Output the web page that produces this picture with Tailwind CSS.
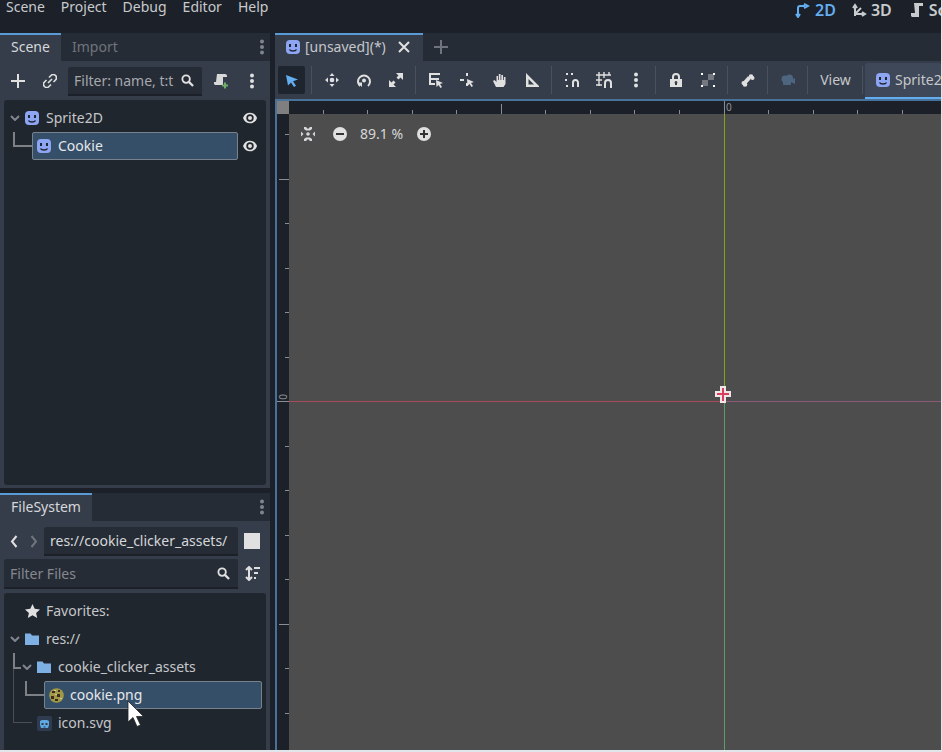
<!DOCTYPE html>
<html lang="en">
<head>
    <meta charset="UTF-8">
    <title>Godot Editor</title>
    <script src="https://cdn.jsdelivr.net/npm/@tailwindcss/browser@4"></script>
</head>
<body class="bg-[#e0e6ea] overflow-hidden">
    <svg class="hidden">
        <symbol id="face" viewBox="0 0 14 14">
            <rect width="14" height="14" rx="4" fill="#8da5f3"/>
            <rect x="3" y="4" width="2" height="3" fill="#1f2633"/>
            <rect x="9" y="4" width="2" height="3" fill="#1f2633"/>
            <path d="M3.500 9.500c1 2 6 2 7 0" fill="none" stroke="#1f2633" stroke-width="1.400"/>
        </symbol>
        <symbol id="eye" viewBox="0 0 14 14">
            <path d="M0 7C2 0 12 0 14 7C12 14 2 14 0 7z" fill="#e0e0e0"/>
            <circle cx="7" cy="7" r="3.700" fill="#20262e"/>
            <circle cx="7" cy="7" r="2" fill="#e0e0e0"/>
        </symbol>
        <symbol id="dots" viewBox="0 0 4 16">
            <circle cx="2" cy="2.500" r="2" fill="currentColor"/>
            <circle cx="2" cy="8" r="2" fill="currentColor"/>
            <circle cx="2" cy="13.500" r="2" fill="currentColor"/>
        </symbol>
        <symbol id="search" viewBox="0 0 14 14">
            <circle cx="5.500" cy="5.500" r="4" fill="none" stroke="#e0e0e0" stroke-width="2"/>
            <path d="M8.500 8.500L13 13" stroke="#e0e0e0" stroke-width="2.400"/>
        </symbol>
        <symbol id="folder" viewBox="0 0 14 14">
            <path d="M0 1.500h5.500l1.500 2h7v9.500h-14z" fill="#7fb0e3"/>
        </symbol>
        <symbol id="chevron" viewBox="0 0 10 6">
            <path d="M1 1l4 4l4-4" fill="none" stroke="#808590" stroke-width="2"/>
        </symbol>
    </svg>

    <div class="w-[941px] h-[750px] bg-[#1c2129] flex flex-col font-['Noto_Sans',sans-serif] text-[14px] leading-[20px] text-[#d5d7da] overflow-hidden">
        <!-- top menu -->
        <header class="h-[33px] shrink-0 flex items-start relative">
            <nav class="flex -mt-[3px] pl-[6px] gap-[16px] text-[#c8cacd]">
                <span>Scene</span><span>Project</span><span>Debug</span><span>Editor</span><span>Help</span>
            </nav>
            <div class="absolute left-[795px] -top-[2px] flex items-center font-semibold text-[16px] h-[24px]">
                <svg class="w-[15px] h-[15px] mr-[5px]" viewBox="0 0 15 15" fill="none" stroke="#63aef0" stroke-width="2"><path d="M1 11l2 3l2-3M3 12V5q0-2 2-2h5M9 1l4 2l-4 2" /></svg>
                <span class="text-[#63aef0]">2D</span>
                <svg class="w-[15px] h-[15px] ml-[16px] mr-[4px]" viewBox="0 0 15 15" fill="none" stroke="#c8cacd" stroke-width="2"><path d="M3 13V3M1 5l2-3l2 3M3 11h9M10 9l3 2l-3 2M3 11l6-6"/></svg>
                <span class="text-[#c8cacd]">3D</span>
                <svg class="w-[14px] h-[16px] ml-[18px] mr-[5px]" viewBox="0 0 14 16"><path d="M4 1h9v3h-4v11h-7l-1-1v-3h4z" fill="#c8cacd"/></svg>
                <span class="text-[#c8cacd]">Script</span>
            </div>
        </header>

        <main class="flex-1 flex min-h-0">
            <!-- left docks -->
            <aside class="w-[270px] shrink-0 flex flex-col gap-[5px]">
                <section class="h-[455px] bg-[#363d4a] flex flex-col">
                    <div class="h-[28px] shrink-0 bg-[#262c36] flex items-stretch relative">
                        <div class="w-[61px] bg-[#363d4a] border-t-2 border-[#5b9bd5] pl-[11px] leading-[24px] text-[#d5d7da]">Scene</div>
                        <div class="pl-[11px] leading-[28px] text-[#6f747c]">Import</div>
                        <svg class="absolute left-[260px] top-[6px] w-[4px] h-[16px] text-[#80858d]"><use href="#dots"/></svg>
                    </div>
                    <div class="h-[35px] shrink-0 relative">
                        <svg class="absolute left-[11px] top-[13px] w-[14px] h-[14px]" viewBox="0 0 14 14"><path d="M0 7h14M7 0v14" stroke="#e0e0e0" stroke-width="2"/></svg>
                        <svg class="absolute left-[43px] top-[13px] w-[14px] h-[14px]" viewBox="0 0 14 14" fill="none" stroke="#e0e0e0" stroke-width="1.600"><path d="M6 3.500l2-2a3 3 0 0 1 4.500 4.500l-2 2M8 10.500l-2 2a3 3 0 0 1-4.500-4.500l2-2M5 9l4-4"/></svg>
                        <div class="absolute left-[68px] top-[6px] w-[134px] h-[29px] bg-[#262c36] border-b-2 border-[#1c2129] rounded-t-[2px] pl-[6px] leading-[28px] text-[#a5a8ad]">Filter: name, t:t</div>
                        <svg class="absolute left-[181px] top-[13px] w-[13px] h-[13px]"><use href="#search"/></svg>
                        <svg class="absolute left-[213px] top-[12px] w-[15px] h-[16px]" viewBox="0 0 15 16"><path d="M4 1h8a2 2 0 0 1 2 2v1h-4v8h-8l-1-1v-2h2z" fill="#d8d8d8"/><path d="M9 12.500h6M12 9.500v6" stroke="#6fae6b" stroke-width="2"/></svg>
                        <svg class="absolute left-[250px] top-[12px] w-[4px] h-[16px] text-[#e0e0e0]"><use href="#dots"/></svg>
                    </div>
                    <div class="mx-[4px] mt-[4px] mb-[3px] flex-1 bg-[#20262e] rounded-[3px] relative">
                        <svg class="absolute left-[6px] top-[15px] w-[10px] h-[6px]"><use href="#chevron"/></svg>
                        <svg class="absolute left-[21px] top-[11px] w-[14px] h-[14px]"><use href="#face"/></svg>
                        <span class="absolute left-[42px] top-[8px] text-[#c5c7ca]">Sprite2D</span>
                        <svg class="absolute left-[239px] top-[11px] w-[14px] h-[14px]"><use href="#eye"/></svg>
                        <div class="absolute left-[9px] top-[32px] w-[19px] h-[15px] border-l-2 border-b-2 border-[#7d8085]"></div>
                        <div class="absolute left-[28px] top-[32px] w-[206px] h-[28px] bg-[#354f69] border border-[#77828d] rounded-[2px] flex items-center pl-[4px] gap-[7px] text-[#e6e7e9]">
                            <svg class="w-[14px] h-[14px]"><use href="#face"/></svg>Cookie
                        </div>
                        <svg class="absolute left-[239px] top-[39px] w-[14px] h-[14px]"><use href="#eye"/></svg>
                    </div>
                </section>

                <section class="flex-1 min-h-0 bg-[#363d4a] flex flex-col">
                    <div class="h-[28px] shrink-0 bg-[#262c36] flex relative">
                        <div class="w-[92px] bg-[#363d4a] border-t-2 border-[#5b9bd5] pl-[11px] leading-[24px]">FileSystem</div>
                        <svg class="absolute left-[260px] top-[6px] w-[4px] h-[16px] text-[#80858d]"><use href="#dots"/></svg>
                    </div>
                    <div class="h-[35px] shrink-0 relative">
                        <svg class="absolute left-[10px] top-[14px] w-[8px] h-[13px]" viewBox="0 0 8 13"><path d="M6.500 1L2 6.500L6.500 12" fill="none" stroke="#e0e0e0" stroke-width="2"/></svg>
                        <svg class="absolute left-[30px] top-[14px] w-[8px] h-[13px]" viewBox="0 0 8 13"><path d="M1.500 1L6 6.500L1.500 12" fill="none" stroke="#70757d" stroke-width="2"/></svg>
                        <div class="absolute left-[44px] top-[6px] w-[194px] h-[29px] bg-[#262c36] border-b-2 border-[#1c2129] rounded-t-[2px] pl-[6px] leading-[27px] text-[#d5d7da]">res://cookie_clicker_assets/</div>
                        <div class="absolute left-[244px] top-[12px] w-[16px] h-[16px] bg-[#e0e0e0]"></div>
                    </div>
                    <div class="h-[33px] shrink-0 relative">
                        <div class="absolute left-[4px] top-[3px] w-[234px] h-[30px] bg-[#262c36] border-b-2 border-[#1c2129] rounded-t-[2px] pl-[6px] leading-[29px] text-[#85888e]">Filter Files</div>
                        <svg class="absolute left-[217px] top-[11px] w-[13px] h-[13px]"><use href="#search"/></svg>
                        <svg class="absolute left-[245px] top-[10px] w-[15px] h-[15px]" viewBox="0 0 15 15" fill="none" stroke="#e0e0e0" stroke-width="2"><path d="M4 1v13M1 4l3-3l3 3M1 11l3 3l3-3M9 2h6M9 7h4M9 12h2"/></svg>
                    </div>
                    <div class="mx-[4px] mt-[4px] flex-1 bg-[#20262e] rounded-t-[3px] relative">
                        <svg class="absolute left-[21px] top-[11px] w-[15px] h-[14px]" viewBox="0 0 15 14"><path d="M7.500 0l2.200 4.800l5.300.6l-3.900 3.500l1.100 5.100l-4.700-2.700l-4.700 2.700l1.100-5.100l-3.900-3.500l5.300-.6z" fill="#e0e0e0"/></svg>
                        <span class="absolute left-[42px] top-[8px] text-[#c5c7ca]">Favorites:</span>
                        <svg class="absolute left-[6px] top-[43px] w-[10px] h-[6px]"><use href="#chevron"/></svg>
                        <svg class="absolute left-[21px] top-[39px] w-[14px] h-[14px]"><use href="#folder"/></svg>
                        <span class="absolute left-[42px] top-[36px] text-[#c5c7ca]">res://</span>
                        <div class="absolute left-[9px] top-[75px] w-[19px] h-[55px] border-l border-b border-[#4a4f57]"></div>
                        <div class="absolute left-[9px] top-[60px] w-[8px] h-[16px] border-l-2 border-b-2 border-[#7d8085]"></div>
                        <svg class="absolute left-[18px] top-[71px] w-[10px] h-[6px]"><use href="#chevron"/></svg>
                        <svg class="absolute left-[33px] top-[67px] w-[14px] h-[14px]"><use href="#folder"/></svg>
                        <span class="absolute left-[54px] top-[64px] text-[#c5c7ca]">cookie_clicker_assets</span>
                        <div class="absolute left-[21px] top-[88px] w-[19px] h-[15px] border-l-2 border-b-2 border-[#7d8085]"></div>
                        <div class="absolute left-[40px] top-[88px] w-[218px] h-[28px] bg-[#354f69] border border-[#77828d] rounded-[2px] flex items-center pl-[4px] gap-[6px] text-[#e6e7e9]">
                            <svg class="w-[15px] h-[15px]" viewBox="0 0 15 15"><circle cx="7.500" cy="7.500" r="7.300" fill="#a09a48"/><path d="M3 3h3v2h-3zM9 2h2v2h-2zM2 8h3v3h-3zM8 6h3v3h-3zM6 11h3v2h-3z" fill="#3d2c1c"/><path d="M6 6h2v1h-2zM11 10h2v1h-2zM5 2h2v1h-2z" fill="#d8c890"/></svg>cookie.png
                        </div>
                        <div class="absolute left-[33px] top-[123px] w-[15px] h-[15px] bg-[#2f3b50] rounded-[2px] flex items-center justify-center">
                            <svg class="w-[11px] h-[10px]" viewBox="0 0 11 10"><path d="M1 2l2-1h5l2 1v4l-1 3h-7l-1-3z" fill="#5fa8e0"/><path d="M2.500 4h2v2h-2zM6.500 4h2v2h-2zM4.500 7.500h2v1h-2z" fill="#2f3b50"/></svg>
                        </div>
                        <span class="absolute left-[54px] top-[120px] text-[#c5c7ca]">icon.svg</span>
                        <svg class="absolute left-[123px] top-[107px] w-[20px] h-[28px] z-10" viewBox="0 0 20 28"><path d="M1 1v21l5-4.500l4 9l3.500-1.500l-4-8.500h7z" fill="#fff" stroke="#222" stroke-width=".8"/></svg>
                    </div>
                </section>
            </aside>

            <!-- editor area -->
            <div class="ml-[5px] flex-1 min-w-0 flex flex-col">
                <div class="h-[28px] shrink-0 bg-[#262c36] flex items-stretch">
                    <div class="w-[148px] bg-[#363d4a] border-t-2 border-[#5b9bd5] flex items-center pl-[11px] pb-[2px] gap-[5px]">
                        <svg class="w-[14px] h-[14px]"><use href="#face"/></svg>
                        <span class="text-[#c5c7ca]">[unsaved](*)</span>
                        <svg class="w-[12px] h-[12px] ml-[7px]" viewBox="0 0 12 12"><path d="M1 1l10 10M11 1L1 11" stroke="#e0e0e0" stroke-width="2"/></svg>
                    </div>
                    <svg class="w-[14px] h-[14px] ml-[11px] mt-[7px]" viewBox="0 0 14 14"><path d="M0 7h14M7 0v14" stroke="#70757d" stroke-width="2"/></svg>
                </div>

                <!-- canvas toolbar -->
                <div class="h-[38px] shrink-0 bg-[#363d4a] flex items-center pl-[1px] whitespace-nowrap">
                    <button class="w-[27px] h-[28px] mr-[3px] ml-[2px] bg-[#1f252e] rounded-[2px] flex items-center justify-center">
                        <svg class="w-[15px] h-[15px]" viewBox="0 0 15 15"><path d="M2 2l12 4.500l-5 1.800l3 4.500l-2 1.200l-3-4.500l-3 3z" fill="#63aef0"/></svg>
                    </button>
                    <i class="w-px h-[28px] bg-[#4a515e] ml-[3px] mr-[4px]"></i>
                    <button class="w-[32px] flex justify-center"><svg class="w-[14px] h-[14px]" viewBox="0 0 14 14" fill="#e0e0e0"><path d="M7 0l2.500 3h-5zM7 14l-2.500-3h5zM0 7l3-2.500v5zM14 7l-3 2.500v-5z"/><circle cx="7" cy="7" r="2.300"/></svg></button>
                    <button class="w-[32px] flex justify-center"><svg class="w-[14px] h-[14px]" viewBox="0 0 14 14"><path d="M3 13a6 6 0 1 1 8 0" fill="none" stroke="#e0e0e0" stroke-width="2"/><path d="M0 9.500h5v4.500z" fill="#e0e0e0"/><circle cx="7" cy="7.500" r="2" fill="#e0e0e0"/></svg></button>
                    <button class="w-[32px] flex justify-center"><svg class="w-[14px] h-[14px]" viewBox="0 0 14 14" fill="#e0e0e0"><path d="M7 0h7v7l-2.500-2.500l-2 2l-2-2l2-2zM0 14v-7l2.500 2.500l2-2l2 2l-2 2l2.500 2.500z"/></svg></button>
                    <i class="w-px h-[28px] bg-[#4a515e] ml-[3px] mr-[4px]"></i>
                    <button class="w-[32px] flex justify-center"><svg class="w-[16px] h-[15px]" viewBox="0 0 16 15"><path d="M1 0h11v2h-9v3h8v2h-8v3h4v2h-6z" fill="#e0e0e0"/><path d="M8 7l7 3l-3 1l2 3l-1.500 1l-2-3l-2 2z" fill="#e0e0e0"/></svg></button>
                    <button class="w-[32px] flex justify-center"><svg class="w-[16px] h-[15px]" viewBox="0 0 16 15" fill="#e0e0e0"><path d="M0 6h4v2h-4zM6 0h2v3h-2zM6 10h2v3h-2zM7 6l7 3l-3 1l2 3l-1.500 1l-2-3l-2 2z"/></svg></button>
                    <button class="w-[32px] flex justify-center"><svg class="w-[14px] h-[15px]" viewBox="0 0 14 15"><path d="M3 14l-3-6l1.500-1l2 2v-6h1.500v4h.8v-6h1.700v6h.8v-5h1.700v5h.8v-3h1.700v7l-2 3z" fill="#e0e0e0"/></svg></button>
                    <button class="w-[32px] flex justify-center"><svg class="w-[14px] h-[14px]" viewBox="0 0 14 14"><path fill-rule="evenodd" d="M1 0l13 13v1h-13zM3.500 6v5.500h5.500z" fill="#e0e0e0"/></svg></button>
                    <i class="w-px h-[28px] bg-[#4a515e] ml-[3px] mr-[4px]"></i>
                    <button class="w-[32px] flex justify-center"><svg class="w-[14px] h-[14px]" viewBox="0 0 14 14"><path d="M8 14v-4.500a2.500 2.500 0 0 1 5 0v4.500" fill="none" stroke="#e0e0e0" stroke-width="2"/><path d="M1 0h2v2h-2zM6 0h2v2h-2zM0 6h2v2h-2zM1 12h2v2h-2z" fill="#e0e0e0"/></svg></button>
                    <button class="w-[32px] flex justify-center"><svg class="w-[16px] h-[16px]" viewBox="0 0 16 16"><path d="M3 0v14M8 0v6M13 0v3M0 3h15M0 8h6M0 13h6" stroke="#e0e0e0" stroke-width="1.400"/><path d="M9 16v-5a3 3 0 0 1 6 0v5" fill="none" stroke="#e0e0e0" stroke-width="2"/></svg></button>
                    <button class="w-[32px] flex justify-center"><svg class="w-[4px] h-[16px] text-[#e0e0e0]"><use href="#dots"/></svg></button>
                    <i class="w-px h-[28px] bg-[#4a515e] ml-[3px] mr-[4px]"></i>
                    <button class="w-[32px] flex justify-center"><svg class="w-[12px] h-[14px]" viewBox="0 0 12 14"><path fill-rule="evenodd" d="M0 6h2v-2a4 4 0 0 1 8 0v2h2v8h-12zM4 6h4v-2a2 2 0 0 0-4 0zM6 8a1.500 1.500 0 0 0-1 2.500v1.500h2v-1.500a1.500 1.500 0 0 0-1-2.500z" fill="#e0e0e0"/></svg></button>
                    <button class="w-[32px] flex justify-center"><svg class="w-[14px] h-[14px]" viewBox="0 0 14 14"><path d="M7 1h6v6h-6v6h-6v-6h6z" fill="#75787e"/><path d="M0 0h2v2h-2zM12 0h2v2h-2zM0 12h2v2h-2zM12 12h2v2h-2z" fill="#fff"/></svg></button>
                    <i class="w-px h-[28px] bg-[#4a515e] ml-[3px] mr-[4px]"></i>
                    <button class="w-[32px] flex justify-center"><svg class="w-[14px] h-[13px]" viewBox="0 0 14 13"><path d="M4 8.500l4.500-5" stroke="#e0e0e0" stroke-width="4"/><circle cx="10" cy="2.500" r="2.300" fill="#e0e0e0"/><circle cx="11.500" cy="4" r="2" fill="#e0e0e0"/><circle cx="2.500" cy="9" r="2" fill="#e0e0e0"/><circle cx="4" cy="10.500" r="2.300" fill="#e0e0e0"/></svg></button>
                    <i class="w-px h-[28px] bg-[#4a515e] ml-[3px] mr-[4px]"></i>
                    <button class="w-[32px] flex justify-center"><svg class="w-[14px] h-[12px]" viewBox="0 0 14 12" fill="#4e6580"><circle cx="4" cy="5" r="3.500"/><circle cx="8.500" cy="4" r="3.500"/><rect x="2" y="5" width="8" height="6" rx="1"/><path d="M10 6l4-2v6l-4-2z"/></svg></button>
                    <i class="w-px h-[28px] bg-[#4a515e] ml-[3px] mr-[4px]"></i>
                    <button class="w-[47px] text-center text-[#c5c7ca]">View</button>
                    <i class="w-px h-[28px] bg-[#4a515e] ml-[3px] mr-[2px]"></i>
                    <div class="self-end h-[36px] flex-1 bg-[#3f4858] border-b-[2px] border-[#63aef0] flex items-center pl-[11px] gap-[5px] overflow-hidden rounded-t-[2px]">
                        <svg class="w-[14px] h-[14px] shrink-0"><use href="#face"/></svg><span class="text-[#c5c7ca]">Sprite2D</span>
                    </div>
                </div>

                <!-- viewport -->
                <div class="flex-1 relative bg-[#4d4d4d] border-t-2 border-l-2 border-[#48729a] overflow-hidden">
                    <div class="absolute left-0 top-0 w-[12px] h-[13px] bg-[#7f7f7f]"></div>
                    <div class="absolute left-[12px] top-0 right-0 h-[13px] bg-[#1c2129]"></div>
                    <div class="absolute left-0 top-[13px] bottom-0 w-[12px] bg-[#1c2129]"></div>

                    <!-- top ruler ticks -->
                    <i class="absolute top-[9px] left-[46px] w-px h-[4px] bg-[#8a8d92]"></i>
                    <i class="absolute top-[9px] left-[90px] w-px h-[4px] bg-[#8a8d92]"></i>
                    <i class="absolute top-[9px] left-[135px] w-px h-[4px] bg-[#8a8d92]"></i>
                    <i class="absolute top-[9px] left-[179px] w-px h-[4px] bg-[#8a8d92]"></i>
                    <i class="absolute top-[3px] left-[224px] w-px h-[10px] bg-[#8a8d92]"></i>
                    <i class="absolute top-[9px] left-[268px] w-px h-[4px] bg-[#8a8d92]"></i>
                    <i class="absolute top-[9px] left-[313px] w-px h-[4px] bg-[#8a8d92]"></i>
                    <i class="absolute top-[9px] left-[357px] w-px h-[4px] bg-[#8a8d92]"></i>
                    <i class="absolute top-[9px] left-[402px] w-px h-[4px] bg-[#8a8d92]"></i>
                    <i class="absolute top-0 left-[447px] w-px h-[13px] bg-[#8a8d92]"></i>
                    <i class="absolute top-[9px] left-[491px] w-px h-[4px] bg-[#8a8d92]"></i>
                    <i class="absolute top-[9px] left-[536px] w-px h-[4px] bg-[#8a8d92]"></i>
                    <i class="absolute top-[9px] left-[580px] w-px h-[4px] bg-[#8a8d92]"></i>
                    <i class="absolute top-[9px] left-[625px] w-px h-[4px] bg-[#8a8d92]"></i>
                    <span class="absolute left-[449px] top-[0px] text-[10px] leading-[12px] text-[#8f9297]">0</span>

                    <!-- left ruler ticks -->
                    <i class="absolute left-[8px] top-[33px] w-[4px] h-px bg-[#8a8d92]"></i>
                    <i class="absolute left-[2px] top-[78px] w-[10px] h-px bg-[#8a8d92]"></i>
                    <i class="absolute left-[8px] top-[122px] w-[4px] h-px bg-[#8a8d92]"></i>
                    <i class="absolute left-[8px] top-[167px] w-[4px] h-px bg-[#8a8d92]"></i>
                    <i class="absolute left-[8px] top-[211px] w-[4px] h-px bg-[#8a8d92]"></i>
                    <i class="absolute left-[8px] top-[256px] w-[4px] h-px bg-[#8a8d92]"></i>
                    <i class="absolute left-0 top-[300px] w-[12px] h-px bg-[#8a8d92]"></i>
                    <i class="absolute left-[8px] top-[345px] w-[4px] h-px bg-[#8a8d92]"></i>
                    <i class="absolute left-[8px] top-[389px] w-[4px] h-px bg-[#8a8d92]"></i>
                    <i class="absolute left-[8px] top-[434px] w-[4px] h-px bg-[#8a8d92]"></i>
                    <i class="absolute left-[8px] top-[478px] w-[4px] h-px bg-[#8a8d92]"></i>
                    <i class="absolute left-[2px] top-[523px] w-[10px] h-px bg-[#8a8d92]"></i>
                    <i class="absolute left-[8px] top-[567px] w-[4px] h-px bg-[#8a8d92]"></i>
                    <i class="absolute left-[8px] top-[612px] w-[4px] h-px bg-[#8a8d92]"></i>
                    <span class="absolute left-[3px] top-[290px] -rotate-90 text-[10px] leading-[12px] text-[#8f9297]">0</span>

                    <!-- origin axes -->
                    <i class="absolute left-[447px] top-[13px] w-px h-[287px] bg-[#7ea51c]"></i>
                    <i class="absolute left-[447px] top-[301px] bottom-0 w-px bg-[#5f9b6a]"></i>
                    <i class="absolute left-[12px] top-[300px] w-[435px] h-px bg-[#a84a5a]"></i>
                    <i class="absolute left-[448px] right-0 top-[300px] h-px bg-[#8a5a78]"></i>

                    <!-- sprite origin gizmo -->
                    <i class="absolute left-[443px] top-[285px] w-[6px] h-[17px] bg-[#f0e6e8]"></i>
                    <i class="absolute left-[438px] top-[290px] w-[16px] h-[6px] bg-[#f0e6e8]"></i>
                    <i class="absolute left-[445px] top-[287px] w-[2px] h-[13px] bg-[#d8405f]"></i>
                    <i class="absolute left-[440px] top-[292px] w-[12px] h-[2px] bg-[#d8405f]"></i>

                    <!-- zoom widget -->
                    <svg class="absolute left-[24px] top-[26px] w-[14px] h-[14px]" viewBox="0 0 14 14" fill="#d5d7da"><path d="M3 0h2l2 2l2-2h2v2l-2 1.500h-4l-2-1.500zM3 14h2l2-2l2 2h2v-2l-2-1.500h-4l-2 1.500zM0 4.500l2.500 2.500l-2.500 2.500zM14 4.500l-2.500 2.500l2.500 2.500z"/><circle cx="7" cy="7" r="1.800"/></svg>
                    <div class="absolute left-[56px] top-[26px] w-[14px] h-[14px] rounded-full bg-[#e0e0e0] flex items-center justify-center"><i class="w-[8px] h-[2px] bg-[#333]"></i></div>
                    <span class="absolute left-[83px] top-[23px] text-[#d5d7da]">89.1 %</span>
                    <svg class="absolute left-[140px] top-[26px] w-[14px] h-[14px]" viewBox="0 0 14 14"><circle cx="7" cy="7" r="7" fill="#e0e0e0"/><path d="M3 7h8M7 3v8" stroke="#333" stroke-width="2"/></svg>
                </div>
            </div>
        </main>
    </div>
</body>
</html>
